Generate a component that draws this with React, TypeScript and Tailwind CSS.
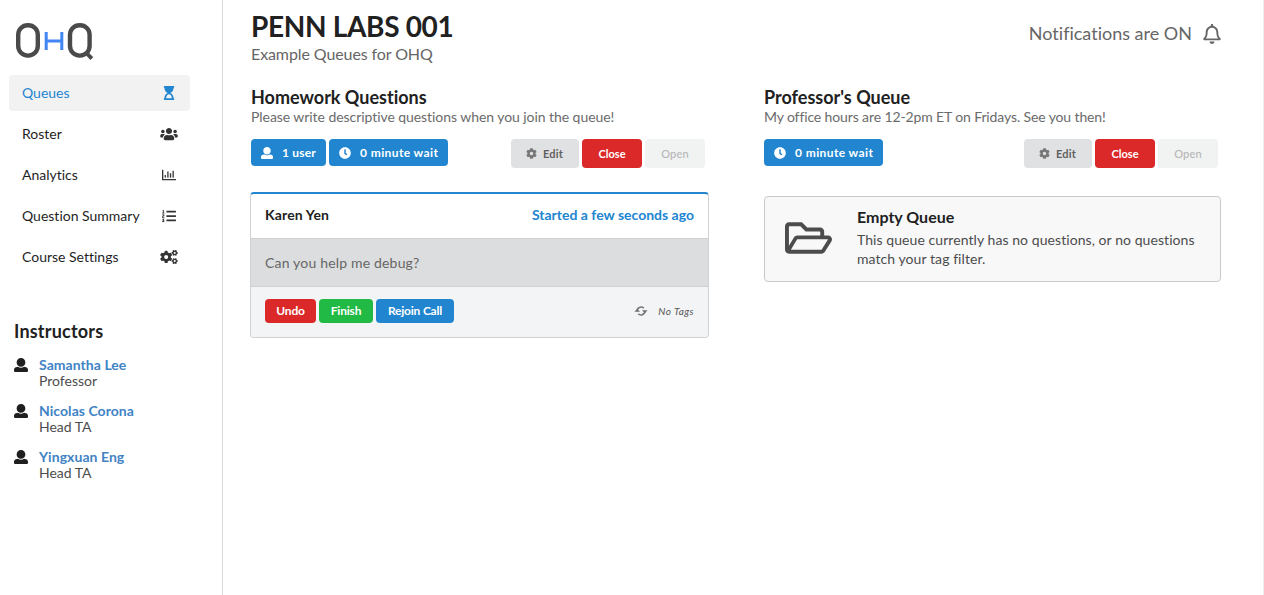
import React from "react";
import { FaHourglassStart, FaUsers, FaListOl, FaCogs, FaCog, FaClock, FaRegFolderOpen, FaRegBell } from "react-icons/fa";

type IconProps = { className?: string };

const UserIcon = ({ className }: IconProps) => (
  <svg viewBox="0 0 512 512" fill="currentColor" className={className}>
    <path d="M256 0c88.366 0 160 71.634 160 160s-71.634 160-160 160S96 248.366 96 160 167.634 0 256 0zm183.283 333.821l-71.313-17.828c-74.923 53.89-165.738 41.864-223.94 0l-71.313 17.828C29.981 344.505 0 382.903 0 426.955V464c0 26.51 21.49 48 48 48h416c26.51 0 48-21.49 48-48v-37.045c0-44.052-29.981-82.45-72.717-93.134z" />
  </svg>
);

const ChartIcon = ({ className }: IconProps) => (
  <svg viewBox="0 0 512 512" fill="currentColor" className={className}>
    <path d="M500 400c6.6 0 12 5.4 12 12v24c0 6.6-5.4 12-12 12H12c-6.6 0-12-5.4-12-12V76c0-6.6 5.4-12 12-12h24c6.6 0 12 5.4 12 12v324h452zm-356-60v-72c0-6.6-5.4-12-12-12h-24c-6.6 0-12 5.4-12 12v72c0 6.6 5.4 12 12 12h24c6.6 0 12-5.4 12-12zm96 0V140c0-6.6-5.4-12-12-12h-24c-6.6 0-12 5.4-12 12v200c0 6.6 5.4 12 12 12h24c6.6 0 12-5.4 12-12zm96 0V204c0-6.6-5.4-12-12-12h-24c-6.6 0-12 5.4-12 12v136c0 6.6 5.4 12 12 12h24c6.6 0 12-5.4 12-12zm96 0V108c0-6.6-5.4-12-12-12h-24c-6.6 0-12 5.4-12 12v232c0 6.6 5.4 12 12 12h24c6.6 0 12-5.4 12-12z" />
  </svg>
);

const RefreshIcon = ({ className }: IconProps) => (
  <svg viewBox="0 0 14 12" fill="none" className={className}>
    <path d="M3.2 6.5A3.9 3.9 0 0 1 9.8 3.2M10.8 5.5A3.9 3.9 0 0 1 4.2 8.8" stroke="currentColor" strokeWidth="1.5" />
    <path d="M0.4 6.8L3.2 3.6L6 6.8ZM8 5.2H13.6L10.8 8.4Z" fill="currentColor" />
  </svg>
);

const Logo = () => (
  <svg viewBox="0 0 80 40" className="h-10 w-20" fill="none">
    <rect x="4.2" y="4.2" width="19.6" height="30.4" rx="9.5" stroke="#4a4a4a" strokeWidth="4.4" />
    <path d="M32.2 11V29M47.8 11V29M32 20H48" stroke="#4285f4" strokeWidth="3" />
    <rect x="56" y="4.2" width="19.6" height="30.4" rx="9.5" stroke="#4a4a4a" strokeWidth="4.4" />
    <path d="M72.5 32L77.8 37.6" stroke="#4a4a4a" strokeWidth="4" />
  </svg>
);

const nav = [
  { label: "Queues", icon: <FaHourglassStart className="mr-px h-[14px] w-[14px]" />, active: true },
  { label: "Roster", icon: <FaUsers className="h-[14px] w-[18px]" /> },
  { label: "Analytics", icon: <ChartIcon className="mr-px h-[14px] w-[14px]" /> },
  { label: "Question Summary", icon: <FaListOl className="mr-px h-[14px] w-[14px]" /> },
  { label: "Course Settings", icon: <FaCogs className="h-[14px] w-[18px]" /> },
];

const people = [
  ["Samantha Lee", "Professor"],
  ["Nicolas Corona", "Head TA"],
  ["Yingxuan Eng", "Head TA"],
];

const Sidebar = () => (
  <aside className="flex h-full w-[223px] shrink-0 flex-col border-r border-[#d9d9da] pt-[21px]">
    <div className="pl-[14px]"><Logo /></div>
    <nav className="mt-[14px] ml-[9px] flex w-[181px] flex-col gap-[5px]">
      {nav.map((n) => (
        <a key={n.label} className={n.active ? "flex h-9 items-center justify-between rounded bg-[#f2f2f2] pr-3 pl-[13px] text-[#2185d0]" : "flex h-9 items-center justify-between rounded pr-3 pl-[13px] text-[#1f1f1f]"}>
          <span>{n.label}</span>
          <span className={n.active ? "flex w-[18px] justify-center" : "flex w-[18px] justify-center text-[#333]"}>{n.icon}</span>
        </a>
      ))}
    </nav>
    <h3 className="mt-[45px] pl-[14px] text-[18px] leading-[23px] font-bold tracking-[0.2px]">Instructors</h3>
    <ul className="mt-[14px] flex flex-col gap-[14px] pl-[14px]">
      {people.map(([name, role]) => (
        <li key={name} className="flex gap-[11px]">
          <UserIcon className="mt-px h-[14px] w-[14px] shrink-0 text-[#1f1f1f]" />
          <div className="leading-4">
            <div className="font-bold tracking-[0.05px] text-[#4183c4]">{name}</div>
            <div className="text-[#4d4d4d]">{role}</div>
          </div>
        </li>
      ))}
    </ul>
  </aside>
);

const WaitLabel = () => (
  <span className="flex h-[27px] w-[119px] items-center rounded bg-[#2185d0] pl-[10px] text-[12px] font-bold tracking-[0.4px] text-white">
    <FaClock className="mr-[9px] h-3 w-3" />0 minute wait
  </span>
);

const Controls = () => (
  <div className="flex gap-[3px] text-[11px] font-bold">
    <button className="flex h-[29px] w-[68px] items-center justify-center gap-[6px] rounded bg-[#e0e1e2] pr-px tracking-[0.2px] text-[#5f6060]">
      <FaCog className="h-[11px] w-[11px] text-[#777]" />Edit
    </button>
    <button className="h-[29px] w-[60px] rounded bg-[#db2828] text-white">Close</button>
    <button className="h-[29px] w-[60px] rounded bg-[#f1f2f2] font-medium tracking-[0.15px] text-[#b5b6b7]">Open</button>
  </div>
);

const QueueHead = ({ title, text, users }: { title: string; text: string; users?: boolean }) => (
  <>
    <h3 className="text-[18px] leading-[23px] font-bold">{title}</h3>
    <p className={users ? "-mt-px mb-[13px] leading-[18px] tracking-[-0.06px] text-[#6b6b6b]" : "-mt-px mb-[13px] leading-[18px] tracking-[-0.12px] text-[#6b6b6b]"}>{text}</p>
    <div className="flex items-start justify-between pr-1">
      <div className="flex gap-[3px]">
        {users && (
          <span className="flex h-[27px] w-[75px] items-center rounded bg-[#2185d0] pl-[10px] text-[12px] font-bold tracking-[0.2px] text-white">
            <UserIcon className="mr-[9px] h-3 w-3" />1 user
          </span>
        )}
        <WaitLabel />
      </div>
      <Controls />
    </div>
  </>
);

export default function App() {
  return (
    <div className="flex h-[595px] w-[1264px] overflow-hidden border-r border-[#eeeeee] bg-white font-['Lato',sans-serif] text-[14px] leading-[18px] text-[#212121] [font-variant-ligatures:none]">
      <Sidebar />
      <main className="flex-1 pt-2 pl-7">
        <header className="flex h-[78px] justify-between pr-[41px]">
          <div>
            <h1 className="text-[28px] leading-9 font-bold tracking-[-0.33px]">PENN LABS 001</h1>
            <p className="text-[16px] leading-5 tracking-[-0.1px] text-[#666]">Example Queues for OHQ</p>
          </div>
          <div className="flex h-[52px] items-center gap-[10px] text-[18px] text-[#666]">
            <span className="pb-[2px]">Notifications are ON</span>
            <FaRegBell className="h-5 w-5" />
          </div>
        </header>
        <div className="flex gap-[55px]">
          <section className="w-[458px]">
            <QueueHead users title="Homework Questions" text="Please write descriptive questions when you join the queue!" />
            <div className="mt-6 -ml-px flex h-[146px] w-[459px] flex-col overflow-hidden rounded border border-t-2 border-[#d0d1d2] border-t-[#2185d0]">
              <div className="flex h-[45px] items-center justify-between border-b border-[#d0d1d2] px-[14px] pb-[2px] font-bold">
                <span className="tracking-[0.15px]">Karen Yen</span>
                <span className="text-[#2185d0]">Started a few seconds ago</span>
              </div>
              <div className="flex h-12 items-center border-b border-[#d0d1d2] bg-[#dcddde] px-[14px] tracking-[0.18px] text-[#666]">Can you help me debug?</div>
              <div className="flex flex-1 items-start justify-between bg-[#f3f4f5] px-[14px] pt-3">
                <div className="flex gap-[3px] text-[12px] font-bold tracking-[-0.2px] text-white">
                  <button className="h-6 w-[51px] rounded bg-[#db2828]">Undo</button>
                  <button className="h-6 w-[54px] rounded bg-[#21ba45]">Finish</button>
                  <button className="h-6 w-[78px] rounded bg-[#2185d0]">Rejoin Call</button>
                </div>
                <div className="flex h-6 items-center gap-[10px] pb-px text-[10px] tracking-[0.45px] text-[#555] italic">
                  <RefreshIcon className="h-3 w-[14px] text-[#777]" />No Tags
                </div>
              </div>
            </div>
          </section>
          <section className="w-[458px]">
            <QueueHead title="Professor's Queue" text="My office hours are 12-2pm ET on Fridays. See you then!" />
            <div className="mt-7 flex h-[86px] w-[457px] items-center rounded border border-[#c9c9ca] bg-[#f8f8f9] pb-[2px]">
              <FaRegFolderOpen className="ml-5 h-[42px] w-[47px] shrink-0 text-[#4c4c4c]" />
              <div className="ml-[25px] w-[350px] pb-[2px]">
                <div className="mb-[3px] text-[16px] leading-5 font-bold">Empty Queue</div>
                <p className="leading-[19px] tracking-[0.07px] text-[#4c4c4c]">This queue currently has no questions, or no questions match your tag filter.</p>
              </div>
            </div>
          </section>
        </div>
      </main>
    </div>
  );
}
